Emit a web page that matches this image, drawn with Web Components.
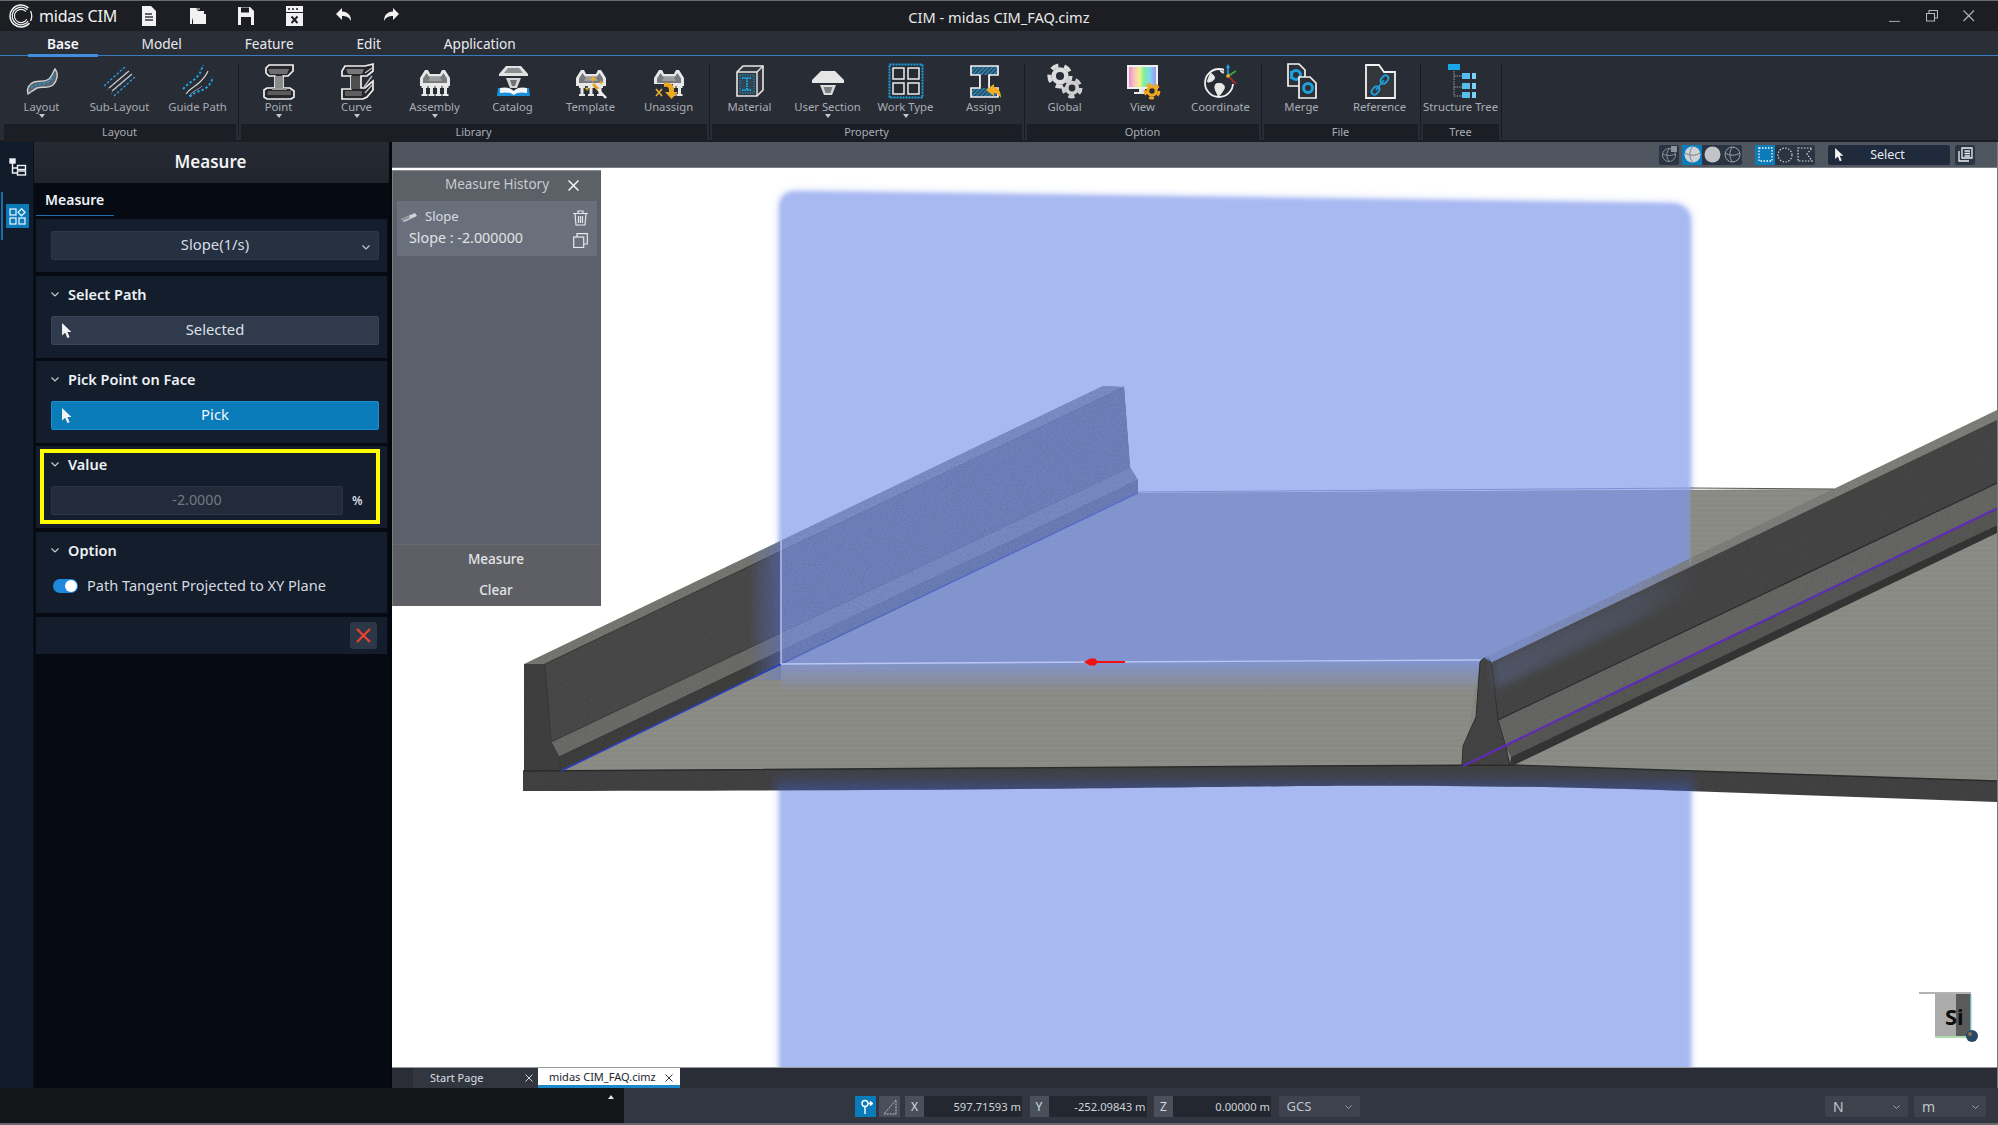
<!DOCTYPE html>
<html lang="en"><head><meta charset="utf-8"><title>CIM - midas CIM_FAQ.cimz</title>
<style>
html,body{margin:0;padding:0;width:1998px;height:1125px;overflow:hidden;background:#111;font-family:"Noto Sans","Open Sans",sans-serif;color:#e6e8ec}
</style></head><body>
<cim-app>
  <cim-titlebar>
    <span slot="brand">midas CIM</span>
    <span slot="title">CIM - midas CIM_FAQ.cimz</span>
  </cim-titlebar>
  <cim-tabs><cim-tab active>Base</cim-tab><cim-tab>Model</cim-tab><cim-tab>Feature</cim-tab><cim-tab>Edit</cim-tab><cim-tab>Application</cim-tab></cim-tabs>
  <cim-ribbon>
    <cim-group label="Layout"><cim-rbtn icon="layout" arrow>Layout</cim-rbtn><cim-rbtn icon="sublayout">Sub-Layout</cim-rbtn><cim-rbtn icon="guide">Guide Path</cim-rbtn></cim-group>
    <cim-group label="Library"><cim-rbtn icon="point" arrow>Point</cim-rbtn><cim-rbtn icon="curve" arrow>Curve</cim-rbtn><cim-rbtn icon="assembly" arrow>Assembly</cim-rbtn><cim-rbtn icon="catalog">Catalog</cim-rbtn><cim-rbtn icon="template">Template</cim-rbtn><cim-rbtn icon="unassign">Unassign</cim-rbtn></cim-group>
    <cim-group label="Property"><cim-rbtn icon="material">Material</cim-rbtn><cim-rbtn icon="usersection" arrow>User Section</cim-rbtn><cim-rbtn icon="worktype" arrow>Work Type</cim-rbtn><cim-rbtn icon="assign">Assign</cim-rbtn></cim-group>
    <cim-group label="Option"><cim-rbtn icon="global">Global</cim-rbtn><cim-rbtn icon="view">View</cim-rbtn><cim-rbtn icon="coordinate">Coordinate</cim-rbtn></cim-group>
    <cim-group label="File"><cim-rbtn icon="merge">Merge</cim-rbtn><cim-rbtn icon="reference">Reference</cim-rbtn></cim-group>
    <cim-group label="Tree"><cim-rbtn icon="tree">Structure Tree</cim-rbtn></cim-group>
  </cim-ribbon>
  <cim-main>
    <cim-rail></cim-rail>
    <cim-panel>
      <span slot="head">Measure</span>
      <span slot="tab">Measure</span>
      <cim-card plain><cim-ctl kind="select">Slope(1/s)</cim-ctl></cim-card>
      <cim-card style="margin-top:1px"><span slot="title">Select Path</span><cim-ctl kind="pick">Selected</cim-ctl></cim-card>
      <cim-card><span slot="title">Pick Point on Face</span><cim-ctl kind="active">Pick</cim-ctl></cim-card>
      <cim-card highlight><span slot="title">Value</span><cim-value unit="%">-2.0000</cim-value></cim-card>
      <cim-card style="margin-top:1px"><span slot="title">Option</span><cim-toggle>Path Tangent Projected to XY Plane</cim-toggle></cim-card>
      <cim-card foot style="margin-top:1px"></cim-card>
    </cim-panel>
    <cim-viewport>
      <cim-history></cim-history>
    </cim-viewport>
  </cim-main>
  <cim-status></cim-status>
</cim-app>
<script>
const bridge = (n=4)=>{
  const xs = n===4?[4.5,11.5,18.5,25.5]:[6,15,24];
  return `<path d="M3 15L8 7H11L13 11H23L25 7H28L33 15V23H3Z" fill="#e8e8e8"/><path d="M9.5 10L12 13.5H24L26.5 10L30 15.5V20H6V15.5Z" fill="#77797c"/><path d="M13 14H23L25 18H11Z" fill="#9a9c9e"/>`+
  xs.map(x=>`<path d="M${x} 23h6v2h-1.500v6h1.500v2h-6v-2h1.500v-6h-1.500z" fill="#e8e8e8"/>`).join('');
};
const gear=(cx,cy,r,col,hole)=>`<circle cx="${cx}" cy="${cy}" r="${r*.72}" fill="${col}"/><circle cx="${cx}" cy="${cy}" r="${r*.88}" fill="none" stroke="${col}" stroke-width="${r*.34}" stroke-dasharray="${r*.62} ${r*.5}"/><circle cx="${cx}" cy="${cy}" r="${r*.34}" fill="${hole}"/>`;
const ICONS={
 layout:`<path d="M4 31C2 26 5 21 10 19C16 17 20 20 25 16C28 13 29 9 31 6C35 11 33 18 29 22C24 26 18 23 13 25C9 27 7 29 4 31Z" fill="#566470" stroke="#cfd0d0" stroke-width="1.400"/><path d="M7 25C12 20 19 22 24 19C27 17 29 14 30 12" fill="none" stroke="#2b92c9" stroke-width="1.700" stroke-dasharray="2.500 1.800"/>`,
 sublayout:`<path d="M7 25L27 8M10 28L30 11" stroke="#cfd0d0" stroke-width="1.100" fill="none"/><path d="M2 23L24 3M12 33L34 13" stroke="#2a9bd6" stroke-width="1.400" stroke-dasharray="2.500 1.800" fill="none"/><path d="M5 27L26 7M9 31L31 11" stroke="#2a9bd6" stroke-width="1" stroke-dasharray="2 4" fill="none" opacity=".7"/>`,
 guide:`<path d="M6 31C11 24 15 24 20 19C24 15 26 13 28 8" stroke="#d8d8d8" stroke-width="1.100" fill="none"/><path d="M9 33C14 27 18 27 22 23" stroke="#d8d8d8" stroke-width="1" fill="none" opacity=".6"/><path d="M3 26C8 20 16 17 20 10C21 8 22 5 23 2" stroke="#1ea1e2" stroke-width="2" stroke-dasharray="2.500 2" fill="none"/><path d="M10 34C15 27 24 29 29 22C31 20 32 17 33 14" stroke="#1ea1e2" stroke-width="2" stroke-dasharray="2.500 2" fill="none"/>`,
 point:`<path d="M8 2H32V8L27 13H22V25H29L33 28V34L30 36H6L3 34V27L6 25H14V13H8L5 10V5Z" fill="#24262b" stroke="#f2f2f2" stroke-width="1.700"/><path d="M7 6H28L26 11H9Z" fill="#6e6e6e"/><path d="M14 13H22V25H14Z" fill="#8a8a8a"/><path d="M7 28H28L30 27V32H6Z" fill="#5b5b5b"/><path d="M11 25H26V27H11Z" fill="#9a9a9a"/>`,
 curve:`<path d="M6 3H26L34 1V8L28 13L26 13H22V25H26L34 18V27L28 34L24 36H3V26H12V13H3V8Z" fill="#24262b" stroke="#f2f2f2" stroke-width="1.700"/><path d="M7 6H25L23 11H9Z" fill="#777"/><path d="M12 13H21V26H12Z" fill="#4f4f4f"/><path d="M6 28H23V33H6Z" fill="#5e5e5e"/><path d="M25 24L33 13M26 10L33 5M26 30L33 22" stroke="#bdbdbd" stroke-width="1.300" fill="none"/>`,
 assembly:bridge(4),
 catalog:`<path d="M11 3H26L33 11V13H4V11Z" fill="#e2e2e2"/><path d="M13 5H24L28 10H9Z" fill="#8b8d90"/><path d="M11 15H26L22 25H15Z" fill="#d5d5d5"/><path d="M15 17H22L20 23H17Z" fill="#6e7073"/><path d="M3 25C8 25 14 25 18.500 29C23 25 29 25 34 25L35 33H2Z" fill="#1990d8"/><path d="M5 25C9 24 15 24 18.500 28C22 24 28 24 32 25V30C27 29 22 29 18.500 32C15 29 10 29 5 30Z" fill="#f4f8fc"/>`,
 template:bridge(3)+`<path d="M20 21L33 35" stroke="#eee" stroke-width="2.500"/><path d="M20 21L25 26" stroke="#e5a62c" stroke-width="2.800"/><path d="M20 12l1 3 3 1-3 1-1 3-1-3-3-1 3-1zM28 17l.700 2 2 .700-2 .700-.700 2-.700-2-2-.700 2-.700zM14 23l.700 2 2 .700-2 .700-.700 2-.700-2-2-.700 2-.700z" fill="#e9ae2f"/>`,
 unassign:bridge(4)+`<rect x="2" y="21" width="20" height="15" fill="#292d36"/><path d="M5 26L11 33M11 26L5 33" stroke="#e9ae2f" stroke-width="1.600"/><path d="M13 20C19 19 23 21 23 27V29H27L20.500 36L14 29H18V27C18 24 16 23 13 24Z" fill="#eca91f"/>`,
 material:`<path d="M5 9L11 3H31V27L25 33H5Z" fill="#33363c" stroke="#e8e8e8" stroke-width="1.600"/><path d="M5 9H25V33M25 9L31 3" stroke="#e8e8e8" stroke-width="1.400" fill="none"/><rect x="7" y="11" width="16" height="20" fill="#2f4655"/><path d="M10 15H20M15 15V27M10 27H20" stroke="#1ea7e8" stroke-width="2" stroke-dasharray="1.500 1"/><path d="M8 12H22V30H8Z" stroke="#1ea7e8" stroke-width="1" stroke-dasharray="1 1.500" fill="none"/>`,
 usersection:`<path d="M11 8H25L34 17V20H2V17Z" fill="#e6e6e6"/><path d="M10 22H26L22 32H14Z" fill="#dcdcdc"/><path d="M13.500 24H22.500L20.500 30H15.500Z" fill="#7d8083"/>`,
 worktype:`<rect x="1.500" y="1.500" width="33" height="33" fill="#252a33" stroke="#1aa4e8" stroke-width="2" stroke-dasharray="2 1"/><path d="M5 5H16V16H5ZM20 5H31V16H20ZM5 20H16V31H5ZM20 20H31V31H20Z" fill="none" stroke="#eee" stroke-width="1.500"/>`,
 assign:`<defs><pattern id="h" width="3" height="3" patternUnits="userSpaceOnUse" patternTransform="rotate(45)"><rect width="3" height="3" fill="#2a3d50"/><rect width="1.500" height="3" fill="#2c8fc0"/></pattern></defs><path d="M5 3H32V12H23V25H32V34H5V25H14V12H5Z" fill="url(#h)" stroke="#f2f2f2" stroke-width="1.700"/><path d="M14 12H23V25H14Z" fill="#292d36"/><path d="M14 12V25M23 12V25" stroke="#f2f2f2" stroke-width="1.700"/><path d="M28 21L20 27L28 33V30C31 30 33 32 35 35C35 29 33 25 28 24Z" fill="#f0ae24"/>`,
 global:gear(13,13,12,'#dcdcdc','#292d36')+gear(25,25,10,'#cfcfcf','#292d36'),
 view:`<defs><linearGradient id="rb"><stop offset="0" stop-color="#f27bd0"/><stop offset=".2" stop-color="#f4c2c2"/><stop offset=".4" stop-color="#f5f08a"/><stop offset=".55" stop-color="#7ff09a"/><stop offset=".75" stop-color="#7fd8f0"/><stop offset="1" stop-color="#a08cf0"/></linearGradient></defs><rect x="3" y="3" width="29" height="22" fill="url(#rb)" stroke="#f0f0f0" stroke-width="2"/><path d="M14 26H20V29H25V31H9V29H14Z" fill="#e8e8e8"/>`+gear(27,28,8,'#f2a81f','#292d36'),
 coordinate:`<circle cx="16" cy="20" r="14" fill="none" stroke="#efefef" stroke-width="1.800"/><path d="M7 10C12 12 13 16 9 18C6 19 5 20 4 18M13 21C18 19 23 22 21 26C19 29 18 32 15 33C14 29 10 25 13 21Z M17 7C18 10 20 11 22 9" fill="#e8e8e8" stroke="#e8e8e8" stroke-width="1"/><rect x="21" y="1" width="15" height="20" fill="#292d36" opacity=".95"/><path d="M25 13V3" stroke="#1ea7e8" stroke-width="1.500"/><path d="M25 1l2 4h-4z" fill="#1ea7e8"/><path d="M25 13L33 8" stroke="#3fae3c" stroke-width="1.500"/><path d="M25 13L33 21" stroke="#c8262c" stroke-width="1.500"/><circle cx="25" cy="13" r="1.800" fill="#e6bb2c"/>`,
 merge:`<path d="M4 1H15L21 7V23H4Z" fill="#2d3036" stroke="#f2f2f2" stroke-width="1.700"/><circle cx="12" cy="12" r="4.500" fill="none" stroke="#1ea0dc" stroke-width="3"/><rect x="6" y="8" width="3" height="8" fill="#1ea0dc"/><path d="M15 14H26L32 20V35H15Z" fill="#2d3036" stroke="#f2f2f2" stroke-width="1.700"/><circle cx="24" cy="25" r="4.500" fill="none" stroke="#1ea0dc" stroke-width="3"/>`,
 reference:`<path d="M4 2H17L22 9H33V35H4Z" fill="#33363b" stroke="#f2f2f2" stroke-width="1.800"/><path d="M14 27L22 17" stroke="#1ea0dc" stroke-width="1.600"/><rect x="10.500" y="23" width="6" height="9" rx="3" transform="rotate(40 13.500 27.500)" fill="none" stroke="#1ea0dc" stroke-width="1.800"/><rect x="19.500" y="12" width="6" height="9" rx="3" transform="rotate(40 22.500 16.500)" fill="none" stroke="#1ea0dc" stroke-width="1.800"/>`,
 tree:`<rect x="5" y="1" width="12" height="6" fill="#18a6ea"/><path d="M11 8V33M11 13H19M11 24H19M11 33H19" stroke="#9aa0a6" stroke-width="1" stroke-dasharray="1.500 1" fill="none"/><path d="M19 10H27V16H19ZM19 20H27V26H19ZM19 29H27V35H19Z" fill="#58bdee"/><path d="M29 10H33V16H29ZM29 20H33V26H29ZM29 29H33V35H29Z" fill="#7fd0f5"/>`,
 doc:`<path d="M1 0H10L15 5V20H1Z" fill="#f2f2f2"/><path d="M4 8H11M4 11H12M4 14H12" stroke="#33363c" stroke-width="1.300"/>`,
 open:`<path d="M1 2H7L9 5H15V8H5L3 15V18H1Z" fill="#f2f2f2"/><path d="M4 8H17V18H4Z" fill="#f2f2f2"/><path d="M7 3H11" stroke="#f2f2f2" stroke-width="1"/>`,
 save:`<path d="M1 1H13L17 5V19H1Z" fill="#f2f2f2"/><rect x="4" y="1.500" width="8" height="5" fill="#1c1e24"/><rect x="4" y="11" width="10" height="8" fill="#1c1e24"/>`,
 xfile:`<rect x="0" y="0" width="17" height="6" fill="#f2f2f2"/><rect x="0" y="7" width="17" height="13" fill="#f2f2f2"/><path d="M2 3H4M6 3H8M10 3H12" stroke="#1c1e24" stroke-width="1.500"/><path d="M5.500 10.500L11.500 17M11.500 10.500L5.500 17" stroke="#1c1e24" stroke-width="1.900"/>`,
 undo:`<path d="M7 2L1 8L7 14V10C11 10 14 11 16 15C16 9 13 6 7 5.500Z" fill="#f2f2f2"/>`,
 redo:`<path d="M10 2L16 8L10 14V10C6 10 3 11 1 15C1 9 4 6 10 5.500Z" fill="#f2f2f2"/>`,
 cursor:`<path d="M1 0L1 14L4.500 11L7 17L9.500 16L7 10L11.500 10Z" fill="#f4f4f4"/>`
};
const VB={doc:'0 0 16 20',open:'0 0 18 20',save:'0 0 18 20',xfile:'0 0 17 20',undo:'0 0 17 16',redo:'0 0 17 16',cursor:'0 0 12 18'};
function def(name,css,html){
  customElements.define(name,class extends HTMLElement{
    constructor(){super();const s=this.attachShadow({mode:'open'});this._css=css;this._html=html;}
    connectedCallback(){const h=typeof this._html==='function'?this._html(this):this._html;
      this.shadowRoot.innerHTML=`<style>${this._css}</style>${h}`;}
  });
}
class CimIcon extends HTMLElement{
  constructor(){super();this.attachShadow({mode:'open'});}
  connectedCallback(){const n=this.getAttribute('name');
    const w=this.getAttribute('w')||36,h=this.getAttribute('h')||36;
    this.shadowRoot.innerHTML=`<style>:host{display:inline-flex;flex:none}svg{display:block;overflow:visible}</style><svg width="${w}" height="${h}" viewBox="${VB[n]||'0 0 36 36'}">${ICONS[n]||''}</svg>`;}
}
customElements.define('cim-icon',CimIcon);

def('cim-app',`:host{display:flex;flex-direction:column;width:1998px;height:1125px;background:#111;box-sizing:border-box}`,`<slot></slot>`);

def('cim-titlebar',`
:host{display:grid;grid-template-columns:1fr auto 1fr;align-items:center;height:31px;box-sizing:border-box;border-top:1px solid #6a6c70;background:#1c1e23;color:#f0f0f0}
.l{display:flex;align-items:center;padding-left:9px}
.brand{display:flex;align-items:center;width:116px;gap:6px;font-size:16px;letter-spacing:-.2px;white-space:nowrap;color:#f2f2f2}
.q{display:flex}.q div{width:48.500px;display:flex;justify-content:center}
.t{font-size:14.600px;color:#e8e8e8;margin-top:2px;white-space:nowrap}
.r{display:flex;justify-content:flex-end;padding-right:23px;gap:25px;align-items:center}
.r svg{display:block}
`,`<div class="l"><div class="brand"><svg width="24" height="24" viewBox="0 0 24 24" fill="none" stroke="#f2f2f2"><circle cx="12" cy="12" r="11" stroke-width="1.500" stroke-dasharray="52 17" transform="rotate(40 12 12)"/><circle cx="12" cy="12" r="8.800" stroke-width="1.200" stroke-dasharray="43 12" transform="rotate(35 12 12)"/><circle cx="12" cy="12" r="6.600" stroke-width="1.100" stroke-dasharray="33 9" transform="rotate(30 12 12)"/><path d="M21.500 7A11 11 0 0 1 21.500 17" stroke-width="1.300"/></svg><slot name="brand"></slot></div>
<div class="q"><div><cim-icon name="doc" w="16" h="20"></cim-icon></div><div><cim-icon name="open" w="18" h="20"></cim-icon></div><div><cim-icon name="save" w="18" h="20"></cim-icon></div><div><cim-icon name="xfile" w="17" h="20"></cim-icon></div><div><cim-icon name="undo" w="17" h="16"></cim-icon></div><div><cim-icon name="redo" w="17" h="16"></cim-icon></div></div></div>
<div class="t"><slot name="title"></slot></div>
<div class="r"><svg width="12" height="12" fill="none" stroke="#9a9c9f"><path d="M0 11.500H11" stroke-width="1.200"/></svg><svg width="12" height="12" fill="none" stroke="#b5b6b8" stroke-width="1.100"><path d="M.500 3.500H8.500V11H.500ZM3 3V.500H11.500V8H9"/></svg><svg width="12" height="12" fill="none" stroke="#b5b6b8" stroke-width="1.100"><path d="M.500 .500L11 11M11 .500L.500 11"/></svg></div>`);

def('cim-tabs',`:host{display:flex;height:25px;box-sizing:border-box;padding-left:15.500px;background:#2a2e37;border-bottom:1.500px solid #3a7cc4;color:#e8eaee;font-size:13.700px}`,`<slot></slot>`);
def('cim-tab',`:host{display:flex;align-items:center;padding:1.500px 31.400px 0;height:24px;position:relative;white-space:nowrap;font-weight:400;line-height:1;box-sizing:border-box}
:host([active]){font-weight:600;color:#f4f6fa}
:host([active])::after{content:"";position:absolute;left:12.500px;right:12px;bottom:-1.500px;height:2.500px;background:#3f8fdc}`,`<slot></slot>`);

def('cim-ribbon',`:host{display:flex;height:86px;box-sizing:border-box;padding-left:2.500px;background:#282c35;border-bottom:2px solid #1a1d22}`,`<slot></slot>`);
def('cim-group',`:host{display:flex;flex-direction:column;position:relative;margin-right:3px}
.b{display:flex;height:68px}
.l{height:16px;margin:0 1px;background:#1b1e25;color:#a9adb4;font-size:11px;line-height:16px;text-align:center}
:host::after{content:"";position:absolute;right:-2px;top:7px;bottom:2px;width:1px;background:#171a1f}`,
 el=>`<div class="b"><slot></slot></div><div class="l">${el.getAttribute('label')}</div>`);
def('cim-rbtn',`:host{display:flex;flex-direction:column;align-items:center;width:78px;height:68px;box-sizing:border-box;padding-top:7px;color:#a9adb4;font-size:11.300px;line-height:16px;white-space:nowrap}
.a{width:0;height:0;border:3px solid transparent;border-top:4px solid #c8c8c8;border-bottom:0;margin-top:-1px}`,
 el=>`<cim-icon name="${el.getAttribute('icon')}"></cim-icon><slot></slot>${el.hasAttribute('arrow')?'<div class="a"></div>':''}`);

def('cim-main',`:host{display:grid;grid-template-columns:34px 355px 3px 1fr;height:946px;background:#04070c}
::slotted(cim-viewport){grid-column:4}`,`<slot></slot>`);

def('cim-rail',`:host{display:block;background:#111c2a;border-right:1px solid #0a111b;box-sizing:border-box;position:relative;padding-top:16px}
.t{display:block;margin-left:9px}
.act{margin-top:16px;height:48px;border-left:2px solid #1c6ea6;margin-left:1px;display:flex;align-items:center}
.bx{margin-left:3px;width:23px;height:24px;background:#0b7ab6;display:flex;align-items:center;justify-content:center}
`,`<svg class="t" width="18" height="18" viewBox="0 0 18 18" fill="none" stroke="#eef1f5" stroke-width="1.400"><rect x="1" y="1" width="5" height="4" fill="#eef1f5"/><path d="M3.500 5V15H8M3.500 10H8"/><rect x="8.500" y="7.500" width="8" height="4"/><rect x="8.500" y="13" width="8" height="4"/></svg>
<div class="act"><div class="bx"><svg width="17" height="17" viewBox="0 0 17 17" fill="none" stroke="#dff2ff" stroke-width="1.300"><rect x="1" y="1" width="6" height="6"/><path d="M12.500 .8L16 4.300L12.500 7.800L9 4.300Z"/><rect x="1" y="10" width="6" height="6"/><rect x="10" y="10" width="6" height="6"/></svg></div></div>`);

def('cim-panel',`:host{display:flex;flex-direction:column;background:#060b13;min-width:0}
.h{height:41px;display:flex;align-items:center;justify-content:center;background:linear-gradient(#262a33,#20242d);color:#f0f2f5;font-size:17px;font-weight:600;padding:0 2px 3px 0;box-sizing:border-box}
.tabs{height:33px;padding-left:2px;box-sizing:border-box}
.tab{display:flex;align-items:center;width:78px;height:33px;box-sizing:border-box;padding:1px 0 0 9px;border-bottom:1.500px solid #1f6fae;color:#eef1f5;font-size:14px;font-weight:600}
.c{display:flex;flex-direction:column;margin:3px 2px 0;gap:3px}`,
`<div class="h"><slot name="head"></slot></div><div class="tabs"><div class="tab"><slot name="tab"></slot></div></div><div class="c"><slot></slot></div>`);

def('cim-card',`:host{display:block;background:#131d2b;position:relative;box-sizing:border-box;padding:0 8px 13px 15px}
:host([plain]){padding-top:12px;padding-bottom:12px}
:host([foot]){height:37px;padding:0}
.t{display:flex;align-items:center;height:40px;gap:9px;color:#eef1f5;font-size:14.500px;font-weight:600;padding-bottom:3.500px;box-sizing:border-box}
.hl{position:absolute;left:3.500px;top:3px;width:340.500px;height:75px;border:4px solid #ffff00;box-sizing:border-box;pointer-events:none}
.x{position:absolute;right:10px;top:5px;width:27px;height:27px;background:#2c3748;border-radius:3px;display:flex;align-items:center;justify-content:center}`,
 el=>{
  if(el.hasAttribute('plain'))return `<slot></slot>`;
  if(el.hasAttribute('foot'))return `<div class="x"><svg width="15" height="15" fill="none" stroke="#e8442c" stroke-width="2.300"><path d="M1 1L14 14M14 1L1 14"/></svg></div>`;
  return `<div class="t"><svg width="8" height="5" fill="none" stroke="#c5cad2" stroke-width="1.200"><path d="M.5 .5L4 4L7.500 .5"/></svg><slot name="title"></slot></div><slot></slot>${el.hasAttribute('highlight')?'<div class="hl"></div>':''}`;
 });
def('cim-ctl',`:host{display:flex;align-items:center;justify-content:center;position:relative;height:29px;box-sizing:border-box;border-radius:2px;font-size:14.800px;color:#dde1e7;background:#2f3a4c;border:1px solid #384458;padding-bottom:3px}
:host([kind=select]){background:#253041;border-color:#2c384a;color:#d7dce3}
:host([kind=active]){background:#0b7cba;border-color:#1b8ecf;color:#eef7fd}
.i{position:absolute;left:9px;top:6px}
.c{position:absolute;right:8px;top:13px}`,
 el=>{const k=el.getAttribute('kind');
  return (k==='select'?`<svg class="c" width="8" height="5" fill="none" stroke="#c5cad2" stroke-width="1.200"><path d="M.5 .5L4 4L7.500 .5"/></svg>`:`<cim-icon class="i" name="cursor" w="11" h="16"></cim-icon>`)+`<slot></slot>`;});
def('cim-value',`:host{display:flex;align-items:center;height:29px;font-size:14.300px}
.i{width:292px;height:29px;box-sizing:border-box;background:#232b3a;border:1px solid #2b3444;border-radius:2px;color:#707886;display:flex;align-items:center;justify-content:center;padding-bottom:2px}
.u{margin-left:9px;color:#d6dbe2;font-size:12px;font-weight:600}`,
 el=>`<div class="i"><slot></slot></div><div class="u">${el.getAttribute('unit')}</div>`);
def('cim-toggle',`:host{display:flex;align-items:center;height:14px;margin-top:7px;padding:0 0 7px 2px;color:#d5d9e0;font-size:14.550px;white-space:nowrap}
.s{width:25px;height:14px;border-radius:7px;background:#1e88dc;position:relative;margin-right:9px;flex:none}
.s::after{content:"";position:absolute;right:1px;top:1px;width:12px;height:12px;border-radius:50%;background:#fff}
.l{display:block;margin-top:-2px}`,`<div class="s"></div><span class="l"><slot></slot></span>`);

const SLAB="M523 771L1300 766L1514 765L1997 781V802L1687 791C1560 786 1400 785 1300 786C1150 788 900 791 523 791Z";
const SCENE=`
<svg viewBox="392 168 1605 899" width="1605" height="899" style="display:block">
<defs>
 <filter id="b4" x="-5%" y="-5%" width="110%" height="110%"><feGaussianBlur stdDeviation="4.500"/></filter>
 <filter id="b2" x="-5%" y="-5%" width="110%" height="110%"><feGaussianBlur stdDeviation="2"/></filter>
 <filter id="noise" x="0" y="0" width="100%" height="100%"><feTurbulence type="fractalNoise" baseFrequency=".7" numOctaves="2" seed="4"/><feColorMatrix values="0 0 0 0 0  0 0 0 0 0  0 0 0 0 0  1.500 0 0 0 -.45"/></filter>
 <pattern id="fl" width="6" height="5" patternUnits="userSpaceOnUse"><rect width="6" height="5" fill="#8b8c85"/><rect width="6" height="1.500" fill="#878881"/></pattern>
 <linearGradient id="ov" gradientUnits="userSpaceOnUse" x1="0" y1="650" x2="0" y2="692"><stop offset="0" stop-color="#7f97ea" stop-opacity=".72"/><stop offset=".28" stop-color="#7f97ea" stop-opacity=".72"/><stop offset="1" stop-color="#7f97ea" stop-opacity="0"/></linearGradient>
 <linearGradient id="ovl" gradientUnits="userSpaceOnUse" x1="748" y1="0" x2="781" y2="0"><stop offset="0" stop-color="#5f78d8" stop-opacity="0"/><stop offset="1" stop-color="#5f78d8" stop-opacity=".5"/></linearGradient>
 <linearGradient id="sl" gradientUnits="userSpaceOnUse" x1="0" y1="772" x2="0" y2="794"><stop offset="0" stop-color="#3f60d8" stop-opacity="0"/><stop offset="1" stop-color="#3f60d8" stop-opacity=".5"/></linearGradient>
 <linearGradient id="rs" gradientUnits="userSpaceOnUse" x1="1480" y1="0" x2="1700" y2="0"><stop offset="0" stop-color="#7f97ea" stop-opacity=".75"/><stop offset=".7" stop-color="#7f97ea" stop-opacity=".5"/><stop offset="1" stop-color="#7f97ea" stop-opacity="0"/></linearGradient>
 <clipPath id="sc"><polygon points="524,664 1103,386 1124,387 1130,467 1138,480 1138,493 1840,489 1997,533 1997,781 1514,765 524,771"/></clipPath>
 <clipPath id="front"><path d="${SLAB}"/></clipPath>
 <clipPath id="dark"><polygon points="524,664 1103,386 1124,387 1130,467 1138,480 1138,493 561,771 524,771"/><polygon points="1480,662 1484,658 1997,410 1997,533 1514,765 1462,765"/><path d="${SLAB}"/></clipPath>
</defs>
<rect x="392" y="168" width="1605" height="899" fill="#fff"/>
<path d="M796 192L1672 204Q1690 205 1690 222V1075H780V208Q780 192 796 192Z" fill="#a8b9f2" filter="url(#b4)"/>
<path d="M796 192L1672 204Q1690 205 1690 222V1075H780V208Q780 192 796 192Z" fill="#a8b9f2" filter="url(#b2)"/>

<polygon points="561,771 1138,493 1840,489 1997,533 1997,781 1514,765 524,771" fill="url(#fl)"/>
<polygon points="524,664 1103,386 1124,387 545,664" fill="#787973"/>
<polygon points="545,664 1124,387 1130,467 551,742" fill="#4a4a4a"/>
<polygon points="551,742 1130,467 1138,480 559,757" fill="#6d6d6a"/>
<polygon points="559,757 1138,480 1138,493 561,771" fill="#3f3f3f"/>
<polygon points="524,664 545,664 551,742 559,757 561,771 524,771" fill="#414141"/>
<path d="M545 664L551 742L559 757L561 771M551 742L1130 467M559 757L1138 480M545 664L1124 387" stroke="#333" stroke-width="1" fill="none"/>

<g clip-path="url(#sc)">
 <rect x="781" y="190" width="908" height="510" fill="url(#ov)"/>
 <rect x="748" y="380" width="33" height="300" fill="url(#ovl)"/>
</g>
<path d="${SLAB}" fill="#434343"/>
<path d="M523 771L1300 766L1514 765L1997 781" stroke="#2c2c2c" stroke-width="1.400" fill="none"/>
<g clip-path="url(#front)"><rect x="776" y="770" width="918" height="32" fill="url(#sl)" filter="url(#b4)"/></g>
<polygon points="1484,658 1997,410 1997,424 1492,662" fill="#80817c"/>
<polygon points="1492,662 1997,420 1997,483 1498,720" fill="#464646"/>
<polygon points="1498,720 1997,483 1997,525 1511,757" fill="#686866"/>
<polygon points="1505,746 1997,508 1997,525 1511,757" fill="#585857"/>
<polygon points="1511,757 1997,525 1997,533 1514,765 1510,765" fill="#363636"/>
<path d="M1480 662L1484 658L1489 658L1492 665L1498 720L1505 743L1510 765H1462L1463 746L1476 717Z" fill="#454545" stroke="#2f2f2f" stroke-width="1"/>
<path d="M1498 720L1997 483" stroke="#2b2b2b" stroke-width="1.200" fill="none"/>
<polygon points="1484,658 1700,554 1700,562 1492,662" fill="url(#rs)"/>
<polygon points="1492,662 1700,562 1700,590 1495,690" fill="url(#rs)" opacity=".3" filter="url(#b4)"/>
<g clip-path="url(#dark)"><rect x="520" y="380" width="1480" height="430" filter="url(#noise)" opacity=".12"/></g>
<path d="M1463 766L1998 508" stroke="#5b2fb0" stroke-width="2.300"/>
<path d="M561 771L781 664" stroke="#2a3fbf" stroke-width="1.600"/>
<path d="M781 664L1138 493" stroke="#3a55cc" stroke-width="1.300" opacity=".55"/>
<path d="M781 664L1100 662L1480 660M781 664V535" stroke="#b9c7f2" stroke-width="1.400" fill="none"/>
<path d="M1138 492L1690 488" stroke="#7d90d6" stroke-width="1"/>
<path d="M1690 488L1834 489" stroke="#555" stroke-width="1"/>
<path d="M1690 488V565" stroke="#8e9fdc" stroke-width="1" opacity=".7"/>
<path d="M1095 662H1125" stroke="#f01212" stroke-width="2"/>
<path d="M1084 662L1090 658.500H1095L1098 662L1095 665.500H1090Z" fill="#f01212"/>
<path d="M1919 993H1971" stroke="#999" stroke-width="1.400"/>
<rect x="1935" y="994" width="21" height="42" fill="#ababab"/><rect x="1956" y="994" width="15" height="42" fill="#5a5a5a"/>
<path d="M1971 994V1034" stroke="#8fd8e8" stroke-width="1.300"/>
<path d="M1935 1037H1968" stroke="#8fd08f" stroke-width="1.500"/>
<text x="1945" y="1025" font-family="Noto Sans, sans-serif" font-size="22" font-weight="700" fill="#0d0d0d">Si</text>
<circle cx="1972" cy="1036" r="6" fill="#264a66"/><circle cx="1970" cy="1034" r="2" fill="#8a7050"/>
</svg>`;

def('cim-viewport',`:host{display:flex;flex-direction:column;grid-column:4;position:relative;min-width:0;border-right:1px solid #777;box-sizing:border-box}
.bar{height:26px;box-sizing:border-box;background:#50565f;border-bottom:1px solid #7c7f84;display:flex;align-items:center;justify-content:flex-end;padding-right:22px}
.g{display:flex;height:20px;background:#2b3442;border-radius:2px;margin-left:3px}
.g>div{width:20px;height:20px;display:flex;align-items:center;justify-content:center}
.on{background:#0b7cba}
.g.w3{margin-left:13px}
.sel{width:122px;height:20px;background:#1f2a3c;border-radius:2px;margin-left:13px;display:flex;align-items:center;position:relative;color:#e6eaf0;font-size:12.500px;justify-content:center;padding:0 3px 1px 0;box-sizing:border-box}
.sel cim-icon{position:absolute;left:6px;top:3px}
.cv{height:899px;position:relative;overflow:hidden}
.doc{height:21px;background:#2a2d35;display:flex;padding-left:21px;font-size:11px;box-sizing:border-box;border-top:1px solid #999}
.d{display:flex;align-items:center;position:relative;box-sizing:border-box;white-space:nowrap;padding-bottom:1px}
.d1{width:125px;background:#32363f;color:#dcdfe4;padding-left:17px}
.d2{width:142px;background:#fff;color:#23262c;padding-left:11px;border-bottom:3px solid #1b89c9}
.d svg{position:absolute;top:6px}
::slotted(cim-history){position:absolute;left:0;top:28px}`,
`<div class="bar">
<div class="g"><div><svg width="17" height="17" fill="none" stroke="#8d9299"><circle cx="8" cy="9" r="6.500"/><path d="M2 8C6 10 10 10 14 8M8 3C5 7 5 11 8 15"/><rect x="10" y="0" width="6" height="6" fill="#8d9299" stroke="none"/></svg></div></div>
<div class="g" style="margin-left:3px"><div class="on"><svg width="17" height="17"><circle cx="8.500" cy="8.500" r="8" fill="#cfd2d6"/><path d="M1 7C6 10 11 10 16 7M8.500 1C5 5 5 12 8.500 16" stroke="#7a7f86" fill="none"/></svg></div><div><svg width="17" height="17"><circle cx="8.500" cy="8.500" r="8" fill="#c2c4c8"/></svg></div><div><svg width="17" height="17" fill="none" stroke="#9ea2a8"><circle cx="8.500" cy="8.500" r="7.500"/><path d="M1 7C6 10 11 10 16 7M8.500 1C5 5 5 12 8.500 16"/></svg></div></div>
<div class="g w3"><div class="on"><svg width="15" height="15" fill="none" stroke="#fff" stroke-width="1.300" stroke-dasharray="1.500 1.500"><rect x="1" y="1" width="13" height="13"/></svg></div><div><svg width="16" height="16" fill="none" stroke="#d4d6da" stroke-width="1.200" stroke-dasharray="1.500 1.500"><circle cx="8" cy="8" r="7"/></svg></div><div><svg width="16" height="15" fill="none" stroke="#e2e4e8" stroke-width="1.200" stroke-dasharray="1.500 1.500"><path d="M1 1H15L10 7L15 14H1Z"/></svg></div></div>
<div class="sel"><cim-icon name="cursor" w="10" h="14"></cim-icon>Select</div>
<div class="g" style="margin-left:5px"><div><svg width="15" height="15" fill="none" stroke="#eef0f3" stroke-width="1.300"><path d="M4 1H14V11H4ZM1 4V14H11M6.500 4H12M6.500 6.500H12M6.500 9H12"/></svg></div></div>
</div>
<div class="cv">${SCENE}<slot></slot></div>
<div class="doc"><div class="d d1">Start Page<svg style="right:5px" width="8" height="8" fill="none" stroke="#d0d3d8"><path d="M.5 .5L7.500 7.500M7.500 .5L.5 7.500"/></svg></div><div class="d d2">midas CIM_FAQ.cimz<svg style="right:7px" width="8" height="8" fill="none" stroke="#33363c"><path d="M.5 .5L7.500 7.500M7.500 .5L.5 7.500"/></svg></div></div>`);

def('cim-history',`:host{display:flex;flex-direction:column;width:209px;height:436px;box-sizing:border-box;background:#5a616b;border-top:1px solid #8a8d92;border-left:1px solid #7c7f84;margin-top:-26px;color:#d4d7dc;font-size:13px;position:absolute}
.h{height:29px;display:flex;align-items:center;background:#5c6067;position:relative;justify-content:center;padding-bottom:3px;box-sizing:border-box;color:#c9ccd1;font-size:13.500px}
.h svg{position:absolute;left:175px;top:9px}
.b{flex:1;padding:1px 4px}
.it{height:55px;background:#6a707b;position:relative;box-sizing:border-box;font-size:13px}
.it .a{position:absolute;left:28px;top:6px;color:#d8dbe0}
.it .v{position:absolute;left:12px;top:27px;color:#e0e3e7;white-space:nowrap;font-size:14.300px}
.it svg{position:absolute}
.f{height:62px;background:#5e5f64;border-top:1px solid #666a70;box-sizing:border-box;display:flex;flex-direction:column;align-items:center;color:#e4e5e8;font-weight:500;font-size:13.500px}
.f div{height:31px;display:flex;align-items:center;margin:-1px 0 1px -2px}`,
`<div class="h">Measure History<svg width="11" height="11" fill="none" stroke="#f2f3f5" stroke-width="1.500"><path d="M.5 .5L10.500 10.500M10.500 .5L.5 10.500"/></svg></div>
<div class="b"><div class="it">
<svg style="left:4px;top:11px" width="16" height="11"><path d="M0 7L14 1L16 4L3 10Z" fill="#cfd2d6"/><path d="M0 7L8 4L9 6L2 9Z" fill="#8b8f96"/></svg>
<span class="a">Slope</span><span class="v">Slope : -2.000000</span>
<svg style="left:176px;top:9px" width="15" height="16" fill="none" stroke="#e6e8ec" stroke-width="1.200"><path d="M0 3.500H15M5 3.500V1H10V3.500M2 3.500L3 15H12L13 3.500M5.500 6V13M7.500 6V13M9.500 6V13"/></svg>
<svg style="left:176px;top:32px" width="15" height="15" fill="none" stroke="#e6e8ec" stroke-width="1.200"><rect x=".7" y="4" width="10" height="10.500"/><path d="M4 4V.7H14.300V11H11"/></svg>
</div></div>
<div class="f"><div>Measure</div><div>Clear</div></div>`);

def('cim-status',`:host{display:flex;height:37px;box-sizing:border-box;background:#313640;border-bottom:2px solid #66686d;font-size:11.200px;color:#c9ced6}
.l{width:624px;background:#141519;position:relative}
.l::after{content:"";position:absolute;left:608px;top:7px;border:3px solid transparent;border-top:0;border-bottom:4px solid #e4e4e4}
.m{display:flex;align-items:flex-start;margin-left:231px;padding-top:8px;flex:1}
.b{width:21px;height:21px;display:flex;align-items:center;justify-content:center;box-sizing:border-box}
.lab{width:19px;height:21px;background:#4a505b;display:flex;align-items:center;justify-content:center;color:#d6dae0;font-size:12px;padding-bottom:1px;box-sizing:border-box}
.val{width:98px;height:21px;background:#23272f;display:flex;align-items:center;justify-content:flex-end;padding:0 1px 1px 0;box-sizing:border-box;margin-right:7.500px;white-space:nowrap;color:#cfd3da}
.dd{height:21px;background:#3d424d;display:flex;align-items:center;position:relative;border-radius:2px;box-sizing:border-box;padding:0 0 1px 8px;color:#bfc4cc}
.dd svg{position:absolute;top:9px}`,
`<div class="l"></div>
<div class="m">
<div class="b" style="background:#0b7cba;margin-right:3px"><svg width="14" height="16" fill="none" stroke="#fff" stroke-width="1.400"><circle cx="6" cy="4.500" r="3"/><path d="M6 8V15M9 4.500H13" /><path d="M11 2.500L13.500 4.500L11 6.500" fill="#fff"/></svg></div>
<div class="b" style="background:#4a505b;margin-right:5px"><svg width="16" height="16" fill="none" stroke="#b8bdc5"><path d="M14 1L2 15H14Z" stroke-dasharray="2 1"/></svg></div>
<div class="lab">X</div><div class="val">597.71593 m</div>
<div class="lab">Y</div><div class="val">-252.09843 m</div>
<div class="lab">Z</div><div class="val">0.00000 m</div>
<div class="dd" style="width:81px;font-size:13px">GCS<svg style="right:8px" width="7" height="4" fill="none" stroke="#9aa0a8"><path d="M.5 .5L3.500 3.500L6.500 .5"/></svg></div>
<div style="flex:1"></div>
<div class="dd" style="width:83px;font-size:14px">N<svg style="right:8px" width="7" height="4" fill="none" stroke="#9aa0a8"><path d="M.5 .5L3.500 3.500L6.500 .5"/></svg></div>
<div class="dd" style="width:72px;margin:0 12px 0 6px;font-size:14px">m<svg style="right:7px" width="7" height="4" fill="none" stroke="#9aa0a8"><path d="M.5 .5L3.500 3.500L6.500 .5"/></svg></div>
</div>`);
</script>
</body></html>
